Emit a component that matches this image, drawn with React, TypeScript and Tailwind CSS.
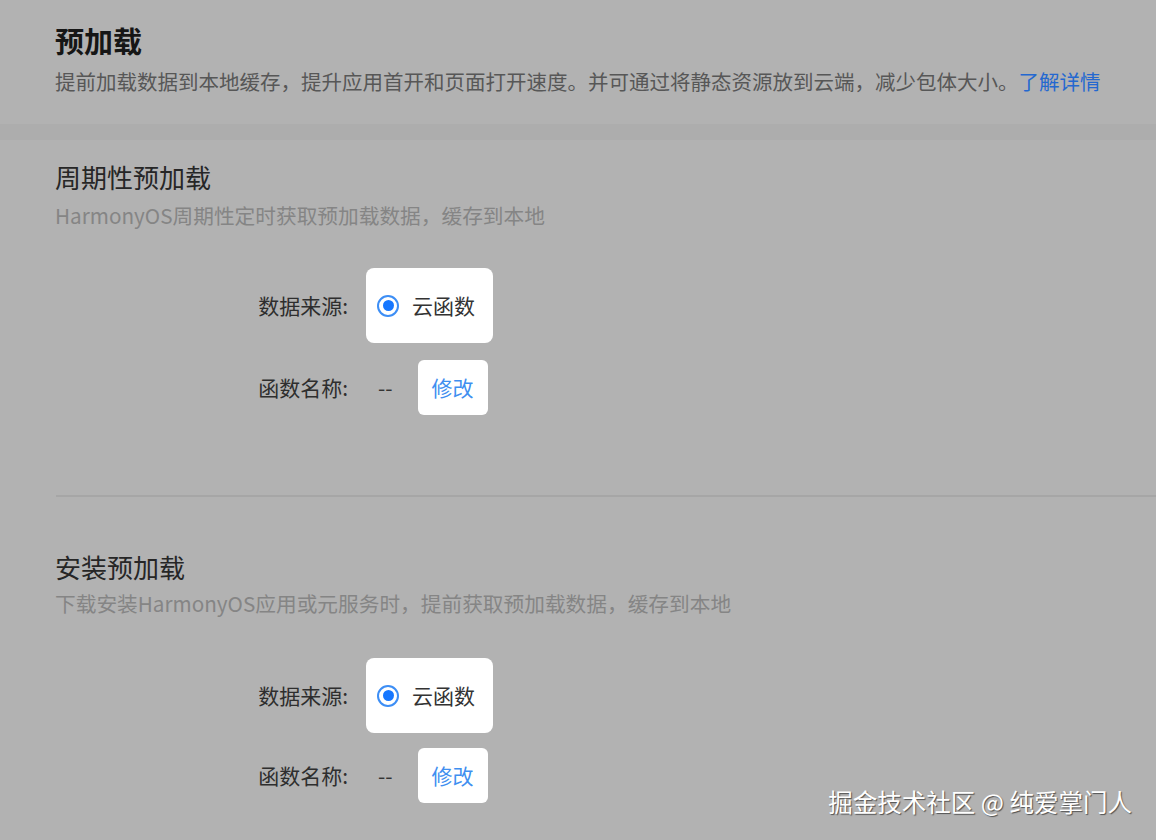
import React from 'react';

const font = { fontFamily: '"Noto Sans CJK SC", "Noto Sans", sans-serif' };

function Radio() {
  return (
    <span className="flex h-[22px] w-[22px] items-center justify-center rounded-full border-2 border-[#3d8ef5]">
      <span className="h-[11px] w-[11px] rounded-full bg-[#1677ff]" />
    </span>
  );
}

function SourceForm({ gap }: { gap: string }) {
  return (
    <div className="flex flex-col">
      <div className="flex items-center">
        <div className="w-[348px] text-right text-[21px] text-[#2e2e2e]">数据来源:</div>
        <div className="ml-[18px] flex h-[75px] w-[127px] items-center rounded-[8px] bg-white pl-[11px]">
          <Radio />
          <span className="ml-[13px] text-[21px] text-[#333]">云函数</span>
        </div>
      </div>
      <div className={`flex items-center ${gap}`}>
        <div className="w-[348px] text-right text-[21px] text-[#2e2e2e]">函数名称:</div>
        <span className="ml-[30px] text-[21px] text-[#333]">--</span>
        <div className="ml-[25px] flex h-[55px] w-[70px] items-center justify-center rounded-[6px] bg-white">
          <span className="text-[21px] text-[#3f8ff0]">修改</span>
        </div>
      </div>
    </div>
  );
}

function Section({ title, desc, top, descGap, formGap, rowGap }: { title: string; desc: string; top: string; descGap: string; formGap: string; rowGap: string }) {
  return (
    <section className={`flex flex-col ${top}`}>
      <h2 className="pl-[55px] text-[26px] leading-[32px] text-[#262626]">{title}</h2>
      <p className={`pl-[55px] text-[20.7px] leading-[28px] text-[#858585] ${descGap}`}>{desc}</p>
      <div className={formGap}>
        <SourceForm gap={rowGap} />
      </div>
    </section>
  );
}

export default function App() {
  return (
    <div className="relative h-[840px] w-[1156px] overflow-hidden bg-[#b2b2b2]" style={font}>
      {/* page header */}
      <header className="flex flex-col pl-[55px] pt-[22px]">
        <h1 className="text-[29px] font-bold leading-[36px] text-[#161616]">预加载</h1>
        <p className="mt-[9px] text-[20.5px] leading-[28px] text-[#575757]">
          提前加载数据到本地缓存，提升应用首开和页面打开速度。并可通过将静态资源放到云端，减少包体大小。
          <span className="text-[#2468d0]">了解详情</span>
        </p>
      </header>

      <div className="mt-[29px] h-[16px] bg-[#adadad]" />

      <Section
        title="周期性预加载"
        desc="HarmonyOS周期性定时获取预加载数据，缓存到本地"
        top="mt-[21px]"
        descGap="mt-[8px]"
        formGap="mt-[39px]"
        rowGap="mt-[17px]"
      />

      <div className="ml-[56px] mt-[80px] h-[2px] bg-[#a6a6a6]" />

      <Section
        title="安装预加载"
        desc="下载安装HarmonyOS应用或元服务时，提前获取预加载数据，缓存到本地"
        top="mt-[54px]"
        descGap="mt-[6px]"
        formGap="mt-[41px]"
        rowGap="mt-[15px]"
      />

      <div className="absolute right-[24px] top-[785px] whitespace-pre text-[24.5px] leading-[34px] text-white [text-shadow:1px_1px_1px_rgba(0,0,0,0.55)]">
        掘金技术社区 @ 纯爱掌门人
      </div>
    </div>
  );
}
